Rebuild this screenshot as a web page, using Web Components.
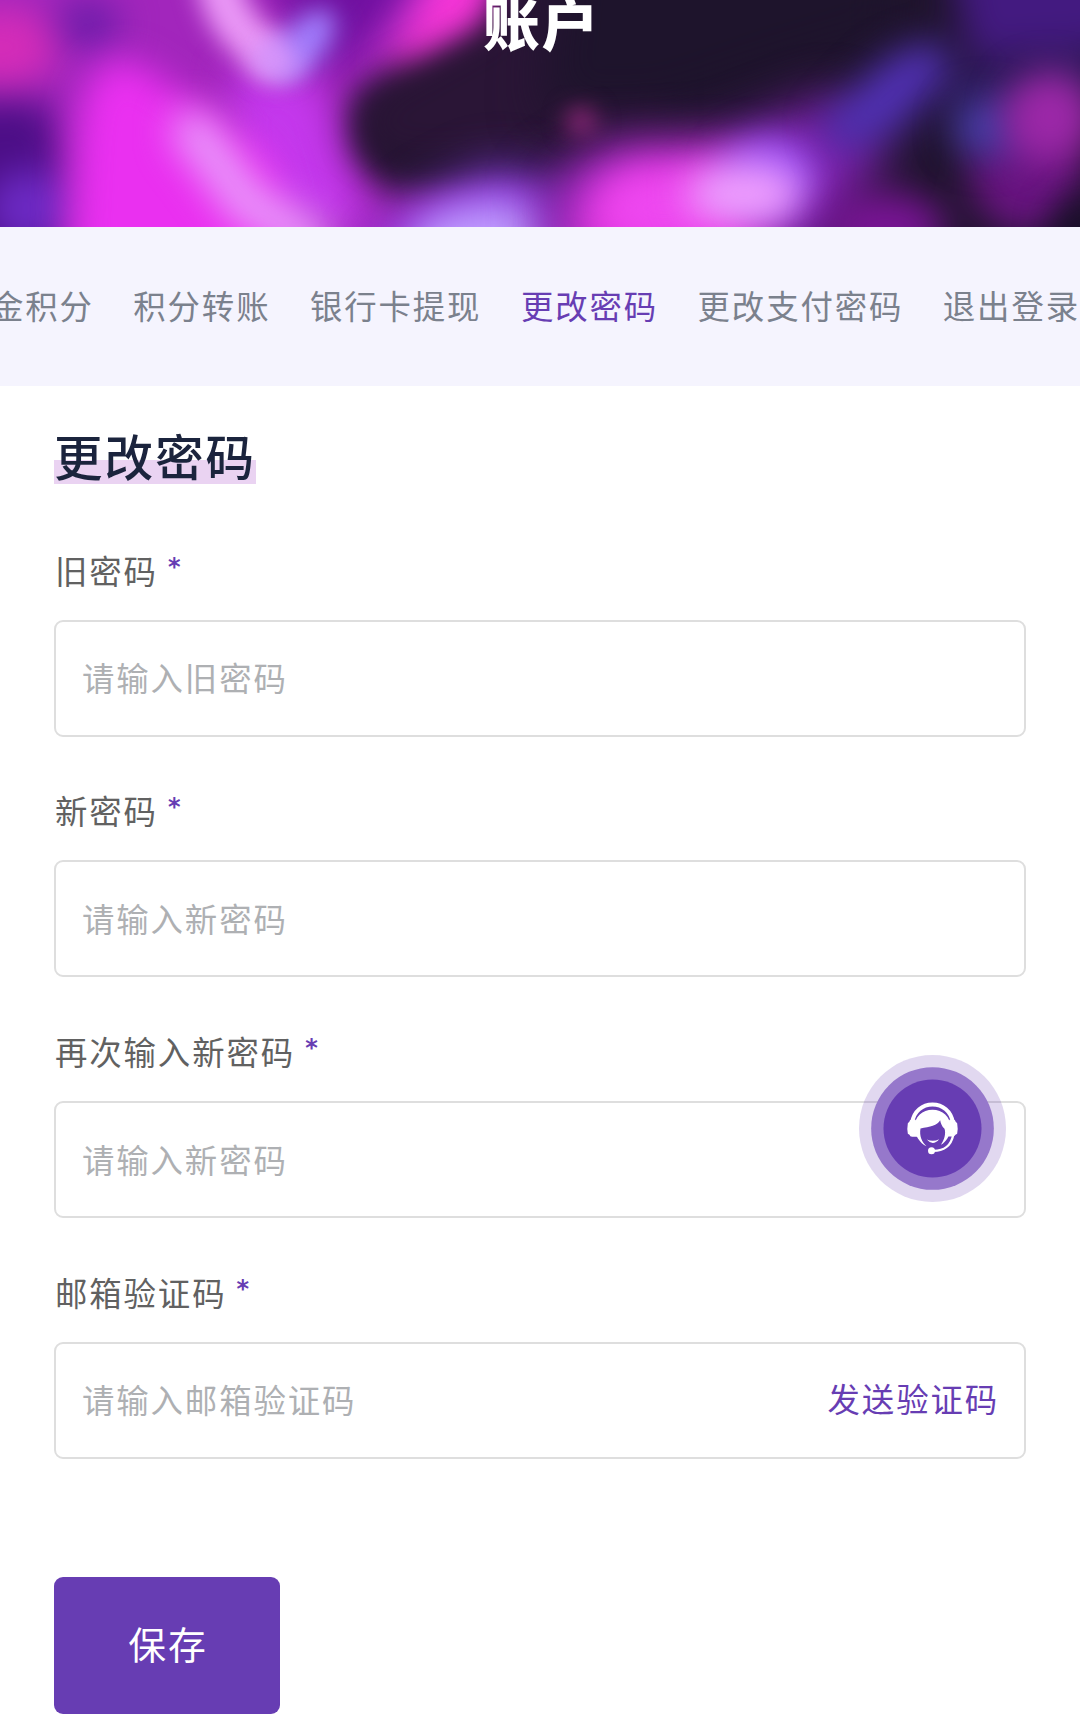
<!DOCTYPE html>
<html lang="zh-CN">
<head>
<meta charset="UTF-8">
<meta name="viewport" content="width=device-width, initial-scale=1">
<title>账户 - 更改密码</title>
<style>
    body {
        --primary: #673db3;
        --text: #616161;
        margin: 0;
        background: #fff;
        color: var(--text);
        font-family: "Noto Sans CJK SC", sans-serif;
        font-size: 32.4px;
        letter-spacing: 1.9px;
        line-height: 1.5;
        overflow: hidden;
    }
</style>
</head>
<body>
<account-hero>账户</account-hero>

<account-nav>
    <nav-link>金积分</nav-link>
    <nav-link>积分转账</nav-link>
    <nav-link>银行卡提现</nav-link>
    <nav-link active>更改密码</nav-link>
    <nav-link>更改支付密码</nav-link>
    <nav-link>退出登录</nav-link>
</account-nav>

<password-form>
    <section-title slot="title">更改密码</section-title>
    <form-field placeholder="请输入旧密码">旧密码</form-field>
    <form-field placeholder="请输入新密码">新密码</form-field>
    <form-field placeholder="请输入新密码">再次输入新密码</form-field>
    <form-field placeholder="请输入邮箱验证码" type="text">邮箱验证码<span slot="action">发送验证码</span></form-field>
    <save-button slot="submit">保存</save-button>
</password-form>

<support-button></support-button>

<script>
class AccountHero extends HTMLElement {
    constructor() {
        super();
        this.attachShadow({ mode: 'open' });
        this.shadowRoot.innerHTML = `
            <style>
                :host {
                    display: grid;
                    height: 227px;
                    overflow: hidden;
                    background: #20142e;
                }
                svg, h1 {
                    grid-area: 1 / 1;
                }
                svg {
                    width: 1080px;
                    height: 227px;
                }
                h1 {
                    z-index: 1;
                    margin: -7px 0 0;
                    padding-left: 3px;
                    color: #fff;
                    font-size: 56.7px;
                    font-weight: 900;
                    line-height: 1;
                    text-align: center;
                }
                filter {
                    color-interpolation-filters: sRGB;
                }
            </style>
            <svg viewBox="0 0 1080 227" aria-hidden="true">
                <defs>
                    <filter id="soft" x="-100%" y="-100%" width="300%" height="300%"><feGaussianBlur stdDeviation="12"/></filter>
                    <filter id="softer" x="-100%" y="-100%" width="300%" height="300%"><feGaussianBlur stdDeviation="18"/></filter>
                    <filter id="softest" x="-100%" y="-100%" width="300%" height="300%"><feGaussianBlur stdDeviation="25"/></filter>
                </defs>
                <rect width="1080" height="227" fill="#20142e"/>
                <!-- purple base on the left -->
                <path filter="url(#softer)" fill="#a226bc" d="M-60-60H560L470 35L400 65L350 100L350 160L390 195L540 195V300H-60Z"/>
                <g filter="url(#softer)">
                    <path fill="#4c0e86" d="M-60 100H48L62 160V290H-60Z"/>
                    <ellipse cx="28" cy="208" rx="40" ry="38" fill="#6c2ac4"/>
                    <ellipse cx="88" cy="24" rx="32" ry="24" fill="#6a1ca8"/>
                    <ellipse cx="0" cy="47" rx="56" ry="40" fill="#d42cb8"/>
                    <path fill="#7010a0" d="M265-50H440L370 40L330 75L300 50Z"/>
                    <path fill="#c438ec" d="M230 70L320 80L340 160L370 225H240Z"/>
                </g>
                <path filter="url(#softer)" fill="#ea30f0" d="M78 130Q85 55 130 60L180 92L270 160L300 280H70Z"/>
                <path filter="url(#softer)" fill="#f836d8" d="M440-40H500L490 28L430 60L385 70Z"/>
                <path filter="url(#softer)" fill="none" stroke="#e896fa" stroke-width="44" stroke-linecap="round" d="M194 132L212 155L248 205L310 240"/>
                <path filter="url(#soft)" fill="none" stroke="#ea98f6" stroke-width="44" stroke-linecap="round" d="M218-20Q226 30 276 58"/>
                <ellipse filter="url(#soft)" cx="304" cy="44" rx="42" ry="22" fill="#a07cfc" transform="rotate(-50 304 44)"/>
                <ellipse filter="url(#soft)" cx="274" cy="60" rx="24" ry="18" fill="#d896fa"/>
                <!-- dark middle -->
                <path filter="url(#softer)" fill="#2a1536" d="M358 130Q358 96 412 70L490 26L520-60H660V140L530 155L430 162Q366 162 358 130Z"/>
                <path filter="url(#softest)" fill="#1e142c" d="M560-70H900V40L780 75L660 115H540Z"/>
                <path filter="url(#softest)" fill="#8c3ce0" d="M370 250L430 200L500 165L580 205V270H370Z"/>
                <ellipse filter="url(#softer)" cx="480" cy="238" rx="72" ry="34" fill="#c09cff" transform="rotate(-8 480 238)"/>
                <!-- light streak along the bottom -->
                <path filter="url(#softest)" fill="#7c20a8" d="M540 185L600 145L720 140L830 95L890 140L830 260H540Z"/>
                <path filter="url(#softest)" fill="#e83ae4" d="M575 190L620 158L740 152L770 270H570Z"/>
                <ellipse filter="url(#softer)" cx="664" cy="208" rx="60" ry="34" fill="#ee48f0"/>
                <ellipse filter="url(#softer)" cx="770" cy="174" rx="46" ry="38" fill="#9c50f4"/>
                <ellipse filter="url(#softer)" cx="744" cy="194" rx="58" ry="32" fill="#ee9efe"/>
                <ellipse filter="url(#soft)" cx="581" cy="121" rx="14" ry="12" fill="#a82c8a"/>
                <!-- blue and violet right side -->
                <g filter="url(#softer)">
                    <path fill="#431a80" d="M945-60H1140V45L970 60Z"/>
                    <path fill="#2e1a5c" d="M960 70L1100 50V110H940L880 190Z"/>
                    <path fill="#5030b2" d="M820 122L886 58L936 38L952 70L896 132L836 156Z"/>
                    <ellipse cx="885" cy="228" rx="60" ry="36" fill="#781494"/>
                    <ellipse cx="1026" cy="172" rx="56" ry="62" fill="#681480"/>
                </g>
                <ellipse filter="url(#softer)" cx="986" cy="127" rx="34" ry="30" fill="#443ca4"/>
                <ellipse filter="url(#softer)" cx="1050" cy="117" rx="46" ry="46" fill="#9c28a8"/>
                <ellipse filter="url(#softer)" cx="1084" cy="234" rx="32" ry="36" fill="#180e28"/>
            </svg>
            <h1><slot></slot></h1>
        `;
    }
}

class AccountNav extends HTMLElement {
    constructor() {
        super();
        this.attachShadow({ mode: 'open' });
        this.shadowRoot.innerHTML = `
            <style>
                :host {
                    display: block;
                    background: #f5f4fe;
                }
                nav {
                    display: flex;
                    justify-content: flex-end;
                    align-items: center;
                    gap: 39.5px;
                    box-sizing: border-box;
                    height: 159px;
                    padding-bottom: 3px;
                    overflow: hidden;
                }
            </style>
            <nav><slot></slot></nav>
        `;
    }
}

class NavLink extends HTMLElement {
    constructor() {
        super();
        this.attachShadow({ mode: 'open' });
        this.shadowRoot.innerHTML = `
            <style>
                :host {
                    display: block;
                    flex: none;
                    color: #7b818d;
                    white-space: nowrap;
                }
                :host([active]) {
                    color: var(--primary);
                }
            </style>
            <slot></slot>
        `;
    }
}

class SectionTitle extends HTMLElement {
    constructor() {
        super();
        this.attachShadow({ mode: 'open' });
        this.shadowRoot.innerHTML = `
            <style>
                :host {
                    display: block;
                }
                h2 {
                    width: fit-content;
                    margin: 0;
                    background: linear-gradient(#ead3f2, #ead3f2) bottom / 100% 24px no-repeat;
                    color: #1b243d;
                    font-size: 48.6px;
                    font-weight: 500;
                    line-height: 58px;
                }
            </style>
            <h2><slot></slot></h2>
        `;
    }
}

class FormField extends HTMLElement {
    constructor() {
        super();
        this.attachShadow({ mode: 'open' });
        const placeholder = this.getAttribute('placeholder') || '';
        const type = this.getAttribute('type') || 'password';
        this.shadowRoot.innerHTML = `
            <style>
                :host {
                    display: block;
                }
                label {
                    display: block;
                    height: 49px;
                    margin-bottom: 25px;
                    padding-left: 1px;
                    line-height: 48px;
                }
                b {
                    margin-left: 1px;
                    color: var(--primary);
                    font-family: "DejaVu Sans", sans-serif;
                    font-size: 24px;
                    line-height: 1;
                    vertical-align: 9px;
                }
                .box {
                    display: flex;
                    align-items: center;
                    box-sizing: border-box;
                    height: 117px;
                    padding: 0 26px 1px;
                    border: 2px solid #dedede;
                    border-radius: 9px;
                }
                input {
                    flex: 1;
                    min-width: 0;
                    padding: 0;
                    border: 0;
                    outline: 0;
                    background: none;
                    color: inherit;
                    font: inherit;
                    letter-spacing: inherit;
                }
                input::placeholder {
                    color: #aeb0b3;
                    opacity: 1;
                }
                .action {
                    margin-right: -1px;
                    padding-bottom: 3px;
                    color: var(--primary);
                }
            </style>
            <label for="field"><slot></slot> <b>*</b></label>
            <div class="box">
                <input id="field" type="${type}" placeholder="${placeholder}">
                <div class="action"><slot name="action"></slot></div>
            </div>
        `;
    }
}

class SaveButton extends HTMLElement {
    constructor() {
        super();
        this.attachShadow({ mode: 'open' });
        this.shadowRoot.innerHTML = `
            <style>
                :host {
                    display: block;
                }
                button {
                    width: 226px;
                    height: 137px;
                    padding: 0 0 4px 2px;
                    border: 0;
                    border-radius: 9px;
                    background: var(--primary);
                    color: #fff;
                    font: inherit;
                    font-size: 37.8px;
                    letter-spacing: inherit;
                }
            </style>
            <button type="submit"><slot></slot></button>
        `;
    }
}

class PasswordForm extends HTMLElement {
    constructor() {
        super();
        this.attachShadow({ mode: 'open' });
        this.shadowRoot.innerHTML = `
            <style>
                :host {
                    display: block;
                    padding: 40px 54px 20px;
                }
                .fields {
                    display: grid;
                    gap: 49.7px;
                    margin: 61.5px 0 118px;
                }
            </style>
            <form>
                <slot name="title"></slot>
                <div class="fields"><slot></slot></div>
                <slot name="submit"></slot>
            </form>
        `;
        this.shadowRoot.querySelector('form').addEventListener('submit', (event) => event.preventDefault());
    }
}

class SupportButton extends HTMLElement {
    constructor() {
        super();
        this.attachShadow({ mode: 'open' });
        this.shadowRoot.innerHTML = `
            <style>
                :host {
                    position: absolute;
                    top: 1055px;
                    left: 859px;
                    display: block;
                    width: 147px;
                    height: 147px;
                }
                svg {
                    display: block;
                }
            </style>
            <svg width="147" height="147" viewBox="27.5 29.5 441 441" role="img" aria-label="在线客服">
                <circle cx="248" cy="250" r="220.5" fill="#673db3" fill-opacity=".2"/>
                <circle cx="248" cy="250" r="184" fill="#9678cb"/>
                <circle cx="248" cy="250" r="147" fill="#673db3"/>
                <path d="M187 232C192 198 218 178 248 178S304 198 309 232" fill="none" stroke="#fff" stroke-width="12"/>
                <path d="M198 224H183Q180 224 179 229L174 234Q171 250 174 266L179 269Q180 275 187 275H203Z" fill="#fff"/>
                <path d="M298 224H313Q316 224 317 229L322 234Q325 250 322 266L317 269Q314 274 309 274H294Z" fill="#fff"/>
                <path d="M194 246C194 214 218 194 248 194S302 214 302 246C301 272 289 290 273 299C283 286 289 265 284 251C276 243 273 235 271 225C263 241 240 244 212 250C208 272 216 291 230 303C210 294 195 271 194 246Z" fill="#fff"/>
                <path d="M231 283Q249 304 268 282Q250 291 231 283Z" fill="#fff"/>
                <path d="M248 317C281 318 304 301 310 270" fill="none" stroke="#fff" stroke-width="7"/>
                <circle cx="245" cy="317" r="10.5" fill="#fff"/>
            </svg>
        `;
    }
}

customElements.define('account-hero', AccountHero);
customElements.define('account-nav', AccountNav);
customElements.define('nav-link', NavLink);
customElements.define('section-title', SectionTitle);
customElements.define('form-field', FormField);
customElements.define('save-button', SaveButton);
customElements.define('password-form', PasswordForm);
customElements.define('support-button', SupportButton);
</script>
</body>
</html>
